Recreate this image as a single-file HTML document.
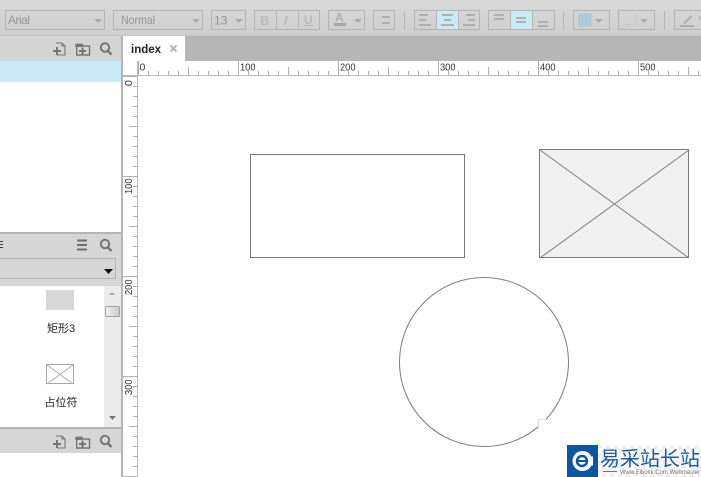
<!DOCTYPE html>
<html><head><meta charset="utf-8">
<style>
html,body{margin:0;padding:0;background:#fff;width:701px;height:477px;overflow:hidden}
svg{display:block;position:absolute;left:0;top:0}
text{font-family:"Liberation Sans","Noto Sans CJK SC",sans-serif}
</style></head>
<body>
<svg width="701" height="477" viewBox="0 0 701 477" xmlns="http://www.w3.org/2000/svg">
<defs>
<linearGradient id="tb" x1="0" y1="0" x2="0" y2="1"><stop offset="0" stop-color="#d8d8d8"/><stop offset="1" stop-color="#cecece"/></linearGradient>
<linearGradient id="th2" x1="0" y1="0" x2="1" y2="0"><stop offset="0" stop-color="#f2f2f2"/><stop offset="1" stop-color="#c8c8c8"/></linearGradient>
<filter id="bl" x="-30%" y="-30%" width="160%" height="160%"><feGaussianBlur stdDeviation="0.35"/></filter>
<filter id="bl2" x="-30%" y="-30%" width="160%" height="160%"><feGaussianBlur stdDeviation="0.8"/></filter>
<pattern id="chk" width="8" height="8" patternUnits="userSpaceOnUse" x="598" y="445"><rect width="8" height="8" fill="#fff"/><rect width="4" height="4" fill="#efefef"/><rect x="4" y="4" width="4" height="4" fill="#efefef"/></pattern>
<pattern id="hm" width="10" height="5" patternUnits="userSpaceOnUse" x="138" y="71"><rect width="1" height="5" fill="#b0b0b0"/></pattern>
<pattern id="hl" width="50" height="9" patternUnits="userSpaceOnUse" x="138" y="67"><rect width="1" height="9" fill="#b0b0b0"/></pattern>
<pattern id="hx" width="100" height="15" patternUnits="userSpaceOnUse" x="138" y="61"><rect width="1" height="15" fill="#b0b0b0"/></pattern>
<pattern id="vm" width="5" height="10" patternUnits="userSpaceOnUse" x="133" y="86"><rect width="5" height="1" fill="#b0b0b0"/></pattern>
<pattern id="vl" width="9" height="50" patternUnits="userSpaceOnUse" x="129" y="76"><rect width="9" height="1" fill="#b0b0b0"/></pattern>
<pattern id="vx" width="15" height="100" patternUnits="userSpaceOnUse" x="123" y="76"><rect width="15" height="1" fill="#b0b0b0"/></pattern>
</defs>

<!-- toolbar -->
<rect width="701" height="36" fill="url(#tb)"/>
<g fill="none" stroke="#b4b4b4" shape-rendering="crispEdges">
<rect x="5.5" y="10.5" width="99" height="19"/>
<rect x="113.5" y="10.5" width="89" height="19"/>
<rect x="211.5" y="10.5" width="34" height="19"/>
<rect x="254.5" y="10.5" width="65" height="19"/>
<path d="M276.500 10v20M298.500 10v20"/>
<rect x="328.5" y="10.5" width="36" height="19"/>
<rect x="373.5" y="10.5" width="21" height="19"/>
<rect x="414.5" y="10.5" width="65" height="19"/>
<rect x="488.5" y="10.5" width="66" height="19"/>
<rect x="573.5" y="10.5" width="36" height="19"/>
<rect x="618.5" y="10.5" width="36" height="19"/>
<rect x="674.5" y="10.5" width="40" height="19"/>
<path d="M404.500 11v19M563.500 11v19M664.500 11v19"/>
</g>
<rect x="437" y="11" width="21" height="18" fill="#c9e9f7"/>
<rect x="511" y="11" width="21" height="18" fill="#c9e9f7"/>
<path d="M436.500 10v20M458.500 10v20M510.500 10v20M532.500 10v20" stroke="#b4b4b4" shape-rendering="crispEdges"/>
<text x="8" y="24" font-size="12" fill="#949494" textLength="22">Arial</text>
<text x="121" y="24" font-size="12" fill="#949494" textLength="34" lengthAdjust="spacingAndGlyphs">Normal</text>
<text x="214" y="24.500" font-size="12" fill="#949494">13</text>
<g fill="#ababab">
<path d="M94 19h8l-4 4zM192 19h8l-4 4zM235 19h8l-4 4zM354 19h8l-4 4zM595 19h8l-4 4zM640 19h8l-4 4z"/>
</g>
<text x="260" y="25" font-size="13" font-weight="700" fill="#bbb">B</text>
<text x="284" y="25" font-size="13" font-style="italic" font-weight="700" fill="#bbb">I</text>
<text x="304" y="24" font-size="12" font-weight="700" fill="#bbb">U</text>
<rect x="304" y="25" width="9" height="1" fill="#bbb"/>
<text x="335" y="21.500" font-size="12" font-weight="700" fill="#b0b0b0">A</text>
<rect x="334" y="23" width="12" height="3" fill="#a8a8a8"/>
<!-- list -->
<rect x="378" y="16" width="2" height="2" fill="#b4d5e2"/><rect x="378" y="22" width="2" height="2" fill="#b4d5e2"/>
<path d="M382 17h8M382 23h8" stroke="#b0b0b0" stroke-width="2" fill="none"/>
<!-- align icons -->
<g fill="#b0b0b0" shape-rendering="crispEdges">
<rect x="419" y="14" width="9" height="2"/><rect x="419" y="19" width="7" height="2"/><rect x="419" y="24" width="12" height="2"/>
<rect x="442" y="14" width="11" height="2"/><rect x="444" y="19" width="7" height="2"/><rect x="441" y="24" width="13" height="2"/>
<rect x="466" y="14" width="9" height="2"/><rect x="468" y="19" width="7" height="2"/><rect x="463" y="24" width="12" height="2"/>
<rect x="494" y="14" width="10" height="2"/><rect x="494" y="18" width="10" height="2"/>
<rect x="516" y="17" width="10" height="2"/><rect x="516" y="21" width="10" height="2"/>
<rect x="538" y="21" width="10" height="2"/><rect x="538" y="25" width="10" height="2"/>
</g>
<rect x="579" y="14" width="12" height="12" fill="#adcbdb" stroke="#b4c4cd" stroke-width="1"/>
<rect x="626" y="15" width="10" height="10" fill="#c4c4c4" filter="url(#bl2)"/>
<rect x="625" y="14" width="10" height="10" fill="#d3d3d3"/>
<path d="M680 26h14" stroke="#b0b0b0" stroke-width="2"/>
<path d="M683 23l8-8 1.500 1.500-8 8z" fill="#b0b0b0"/>
<path d="M699 18h3" stroke="#ababab" stroke-width="3"/>

<rect x="0" y="35" width="701" height="1" fill="#c4c4c4"/>

<!-- left panel -->
<rect x="0" y="36" width="121" height="25" fill="#d4d4d4"/>
<rect x="0" y="61" width="121" height="21" fill="#c9e9f7"/>
<rect x="0" y="232" width="121" height="2" fill="#b5b5b5"/>
<rect x="0" y="234" width="121" height="52" fill="#d6d6d6"/>
<rect x="-2" y="258.500" width="117.500" height="20" fill="#d6d6d6" stroke="#b3b3b3" shape-rendering="crispEdges"/>
<path d="M104 269h9l-4.500 5z" fill="#111"/>
<path d="M0 241.500h3M0 244.500h3M0 247.500h3" stroke="#444" stroke-width="1" shape-rendering="crispEdges"/>
<rect x="104" y="286" width="17" height="141" fill="#ebebeb"/>
<path d="M109 295l3-3 3 3z" fill="#a6a6a6"/>
<path d="M109 416h7l-3.500 4z" fill="#777"/>
<rect x="105.500" y="306.500" width="14" height="10" rx="1" fill="url(#th2)" stroke="#a3a3a3"/>
<rect x="46" y="290" width="28" height="20" fill="#d7d7d7"/>
<text x="47" y="332" font-size="11" fill="#222">矩形3</text>
<rect x="46.500" y="364.500" width="27" height="19" fill="#fff" stroke="#a6a6a6" shape-rendering="crispEdges"/>
<path d="M47 365l26 19M73 365l-26 19" stroke="#b0b0b0" fill="none"/>
<text x="44.500" y="406" font-size="11" fill="#222">占位符</text>
<rect x="0" y="427" width="121" height="2" fill="#b5b5b5"/>
<rect x="0" y="429" width="121" height="24" fill="#d6d6d6"/>

<!-- panel icons top -->
<g fill="none" stroke="#767676" stroke-width="1.400">
<path d="M56 43h6l3 3v9h-8M62 43v3h3" stroke-width="1.100"/>
<path d="M53 51h8M57 47v8" stroke-width="2"/>
<path d="M76.700 44.500h5l1.500 1.500h6.300v9h-12.800z"/>
<path d="M76 44.500h6v1.800h-6z" fill="#767676"/>
<path d="M79 51h7M82.500 47.500v7" stroke-width="2"/>
<circle cx="105" cy="47.500" r="4.200" stroke-width="2"/>
<path d="M108 51l3.500 3.500" stroke-width="2.400"/>
</g>
<!-- panel icons bottom -->
<g fill="none" stroke="#767676" stroke-width="1.400">
<path d="M56 436h6l3 3v9h-8M62 436v3h3" stroke-width="1.100"/>
<path d="M53 444h8M57 440v8" stroke-width="2"/>
<path d="M76.700 437.500h5l1.500 1.500h6.300v9h-12.800z"/>
<path d="M76 437.500h6v1.800h-6z" fill="#767676"/>
<path d="M79 444h7M82.500 440.500v7" stroke-width="2"/>
<circle cx="105" cy="440" r="4.200" stroke-width="2"/>
<path d="M108 443.500l3.500 3.500" stroke-width="2.400"/>
<!-- mid -->
<circle cx="105" cy="244" r="4.200" stroke-width="2"/>
<path d="M108 247.500l3.500 3.500" stroke-width="2.400"/>
</g>
<path d="M77 240.500h10M77 245h10M77 249.500h10" stroke="#6f6f6f" stroke-width="2" fill="none" shape-rendering="crispEdges"/>

<!-- splitter -->
<rect x="121" y="36" width="2" height="441" fill="#b5b5b5"/>

<!-- tab bar -->
<rect x="123" y="36" width="578" height="25" fill="#b6b6b6"/>
<rect x="123" y="36" width="62" height="25" fill="#fff"/>
<text x="131" y="53" font-size="11.500" font-weight="700" fill="#222">index</text>
<path d="M170.500 45.500l6 6M176.500 45.500l-6 6" stroke="#b5b5b5" stroke-width="2"/>

<!-- rulers -->
<rect x="123" y="61" width="578" height="15" fill="#fff"/>
<rect x="138" y="71" width="563" height="5" fill="url(#hm)"/>
<rect x="138" y="67" width="563" height="9" fill="url(#hl)"/>
<rect x="138" y="61" width="563" height="15" fill="url(#hx)"/>
<rect x="123" y="75" width="578" height="1" fill="#bcbcbc"/>
<g font-size="10.500" fill="#333">
<text x="139.500" y="70.500">0</text>
<text x="240" y="70.500" textLength="15.500" lengthAdjust="spacingAndGlyphs">100</text>
<text x="340" y="70.500" textLength="15.500" lengthAdjust="spacingAndGlyphs">200</text>
<text x="440" y="70.500" textLength="15.500" lengthAdjust="spacingAndGlyphs">300</text>
<text x="540" y="70.500" textLength="15.500" lengthAdjust="spacingAndGlyphs">400</text>
<text x="640" y="70.500" textLength="15.500" lengthAdjust="spacingAndGlyphs">500</text>
</g>
<rect x="133" y="86" width="5" height="391" fill="url(#vm)"/>
<rect x="129" y="76" width="9" height="401" fill="url(#vl)"/>
<rect x="123" y="76" width="15" height="401" fill="url(#vx)"/>
<rect x="137" y="61" width="1" height="416" fill="#bcbcbc"/>
<rect x="123" y="476" width="15" height="1" fill="#bcbcbc"/>
<g font-size="10.500" fill="#333">
<text transform="translate(132,86) rotate(-90)">0</text>
<text transform="translate(132,194) rotate(-90)" textLength="15.500" lengthAdjust="spacingAndGlyphs">100</text>
<text transform="translate(132,295) rotate(-90)" textLength="15.500" lengthAdjust="spacingAndGlyphs">200</text>
<text transform="translate(132,395) rotate(-90)" textLength="15.500" lengthAdjust="spacingAndGlyphs">300</text>
</g>

<!-- canvas shapes -->
<rect x="250.500" y="154.500" width="214" height="103" fill="#fff" stroke="#7a7a7a" shape-rendering="crispEdges"/>
<rect x="539.500" y="149.500" width="149" height="108" fill="#f0f0f0" stroke="#7a7a7a" shape-rendering="crispEdges"/>
<path d="M540 150l149 108M689 150l-149 108" stroke="#808080" fill="none"/>
<circle cx="484" cy="362" r="84.500" fill="#fff" stroke="#7d7d7d"/>
<path d="M538.500 429.500v-10h10" fill="#fff" stroke="#dcdcdc"/>
<rect x="539" y="420" width="9" height="6" fill="#fff"/>

<!-- watermark -->
<rect x="598" y="445" width="103" height="32" fill="url(#chk)"/>
<rect x="567" y="445" width="31" height="32" fill="#0a56a4"/>
<circle cx="582.500" cy="461" r="10" fill="#fff"/>
<circle cx="582" cy="461" r="5" fill="none" stroke="#0a56a4" stroke-width="2.500"/>
<path d="M577 461h10" stroke="#0a56a4" stroke-width="2"/>
<path d="M588 456.500h5v9h-5z" fill="#fff"/>
<g filter="url(#bl)">
<text x="600" y="465.500" font-size="20" fill="#1a5aa8" style="font-family:'Noto Sans CJK SC',sans-serif" textLength="100" lengthAdjust="spacingAndGlyphs">易采站长站</text>
<path d="M603 471.500h14" stroke="#777" stroke-width="1"/>
<text x="620" y="474" font-size="6" fill="#777" textLength="80" lengthAdjust="spacingAndGlyphs">Www.Eiboxk.Com Webmaster</text>
</g>
</svg>
</body></html>
